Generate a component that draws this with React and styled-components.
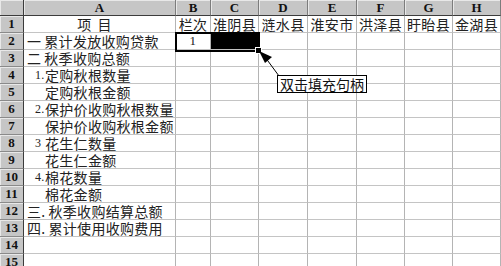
import React from "react";
import styled, { createGlobalStyle } from "styled-components";

const GlobalStyle = createGlobalStyle`
  html, body { margin: 0; padding: 0; background: #fff; }
  body { overflow: hidden; }
`;

const COLS = ["A", "B", "C", "D", "E", "F", "G", "H"];
const COUNTIES = ["淮阴县", "涟水县", "淮安市", "洪泽县", "盱眙县", "金湖县"];

// level 1 = main item, level 2 = indented sub item
const ITEMS = [
  { num: "一", text: "累计发放收购贷款", level: 1 },
  { num: "二", text: "秋季收购总额", level: 1 },
  { num: "1.", text: "定购秋根数量", level: 2 },
  { num: "", text: "定购秋根金额", level: 2 },
  { num: "2.", text: "保护价收购秋根数量", level: 2 },
  { num: "", text: "保护价收购秋根金额", level: 2 },
  { num: "3", text: "花生仁数量", level: 2 },
  { num: "", text: "花生仁金额", level: 2 },
  { num: "4.", text: "棉花数量", level: 2 },
  { num: "", text: "棉花金额", level: 2 },
  { num: "三.", text: "秋季收购结算总额", level: 1 },
  { num: "四.", text: "累计使用收购费用", level: 1 },
];

const App = () => {
  const blankRows = [14, 15];
  return (
    <Sheet>
      <GlobalStyle />
      <Grid>
        <Corner />
        {COLS.map(c => (
          <ColHead key={c}>{c}</ColHead>
        ))}

        <RowHead>1</RowHead>
        <Cell $align="center">
          <Title>项<Gap />目</Title>
        </Cell>
        <Cell $align="center">栏次</Cell>
        {COUNTIES.map(n => (
          <Cell key={n} $align="center">{n}</Cell>
        ))}

        {ITEMS.map((item, i) => (
          <React.Fragment key={i}>
            <RowHead>{i + 2}</RowHead>
            <Cell $indent={item.level === 1 ? 3 : 11}>
              <Num $level={item.level}>{item.num}</Num>
              {item.text}
            </Cell>
            {i === 0 ? (
              <>
                <Cell $align="center"><Digit>1</Digit></Cell>
                <Cell $dark />
              </>
            ) : (
              <>
                <Cell />
                <Cell />
              </>
            )}
            {COUNTIES.slice(1).map(n => <Cell key={n} />)}
          </React.Fragment>
        ))}

        {blankRows.map(r => (
          <React.Fragment key={r}>
            <RowHead>{r}</RowHead>
            {COLS.map(c => <Cell key={c} />)}
          </React.Fragment>
        ))}
      </Grid>

      <Selection>
        <FillHandle />
      </Selection>

      <Pointer width="32" height="30" viewBox="0 0 32 30">
        <line x1="9" y1="8" x2="23" y2="27" stroke="#000" strokeWidth="1" />
        <polygon points="3,2 16,8 9,14" fill="#000" />
      </Pointer>
      <Callout>双击填充句柄</Callout>
    </Sheet>
  );
};

export default App;

const Sheet = styled.div`
  position: relative;
  width: 501px;
  height: 266px;
  overflow: hidden;
  background: #fff;
`;

const Grid = styled.div`
  display: grid;
  grid-template-columns: 24px 152px 35px 48px 49px 49px 48px 48px 48px;
  grid-template-rows: 16px repeat(15, 17px);
`;

const headBase = `
  box-sizing: border-box;
  background: #c6c6c6;
  box-shadow: inset 1px 1px 0 #e8e8e8;
  font-family: "Liberation Serif", "Times New Roman", serif;
  font-weight: bold;
  font-size: 13px;
  color: #111;
  display: flex;
  align-items: center;
  justify-content: center;
`;

const Corner = styled.div`
  ${headBase}
  border-right: 1px solid #3c3c3c;
  border-bottom: 1px solid #3c3c3c;
`;

const ColHead = styled.div`
  ${headBase}
  border-right: 1px solid #7c7c7c;
  border-bottom: 1px solid #3c3c3c;
`;

const RowHead = styled.div`
  ${headBase}
  border-right: 1px solid #3c3c3c;
  border-bottom: 1px solid #8a8a8a;
`;

const Cell = styled.div`
  box-sizing: border-box;
  border-right: 1px solid #b4b4b4;
  border-bottom: 1px solid #c4c4c4;
  background: ${p => (p.$dark ? "#000" : "#fff")};
  display: flex;
  align-items: center;
  justify-content: ${p => (p.$align === "center" ? "center" : "flex-start")};
  padding-left: ${p => (p.$indent ? `${p.$indent}px` : "0")};
  white-space: nowrap;
  overflow: visible;
  font-family: "Noto Sans CJK SC", "Liberation Serif", sans-serif;
  font-size: 14px;
  letter-spacing: 0.3px;
  line-height: 16px;
  color: #222;
`;

const Title = styled.span`
  display: inline-flex;
  align-items: center;
  padding-right: 10px;
`;

const Gap = styled.span`
  display: inline-block;
  width: 6px;
`;

const Num = styled.span`
  display: inline-block;
  width: ${p => (p.$level === 1 ? "auto" : "10px")};
  margin-right: ${p => (p.$level === 1 ? "3px" : "0")};
  font-family: ${p =>
    p.$level === 1
      ? `"Noto Sans CJK SC", sans-serif`
      : `"Liberation Serif", "Times New Roman", serif`};
  font-size: ${p => (p.$level === 1 ? "14px" : "12px")};
`;

const Digit = styled.span`
  font-family: "Liberation Serif", "Times New Roman", serif;
  font-size: 13px;
`;

const Selection = styled.div`
  position: absolute;
  left: 175px;
  top: 32px;
  width: 85px;
  height: 20px;
  box-sizing: border-box;
  border: 2px solid #000;
  pointer-events: none;
`;

const FillHandle = styled.div`
  position: absolute;
  right: -4px;
  bottom: -4px;
  width: 5px;
  height: 5px;
  background: #000;
  border: 1px solid #fff;
`;

const Pointer = styled.svg`
  position: absolute;
  left: 256px;
  top: 49px;
  overflow: visible;
`;

const Callout = styled.div`
  position: absolute;
  left: 277px;
  top: 75px;
  height: 18px;
  box-sizing: border-box;
  padding: 0 2px;
  border: 1px solid #000;
  background: #fff;
  font-family: "Noto Sans CJK SC", sans-serif;
  font-size: 14px;
  line-height: 16px;
  color: #111;
  white-space: nowrap;
`;
